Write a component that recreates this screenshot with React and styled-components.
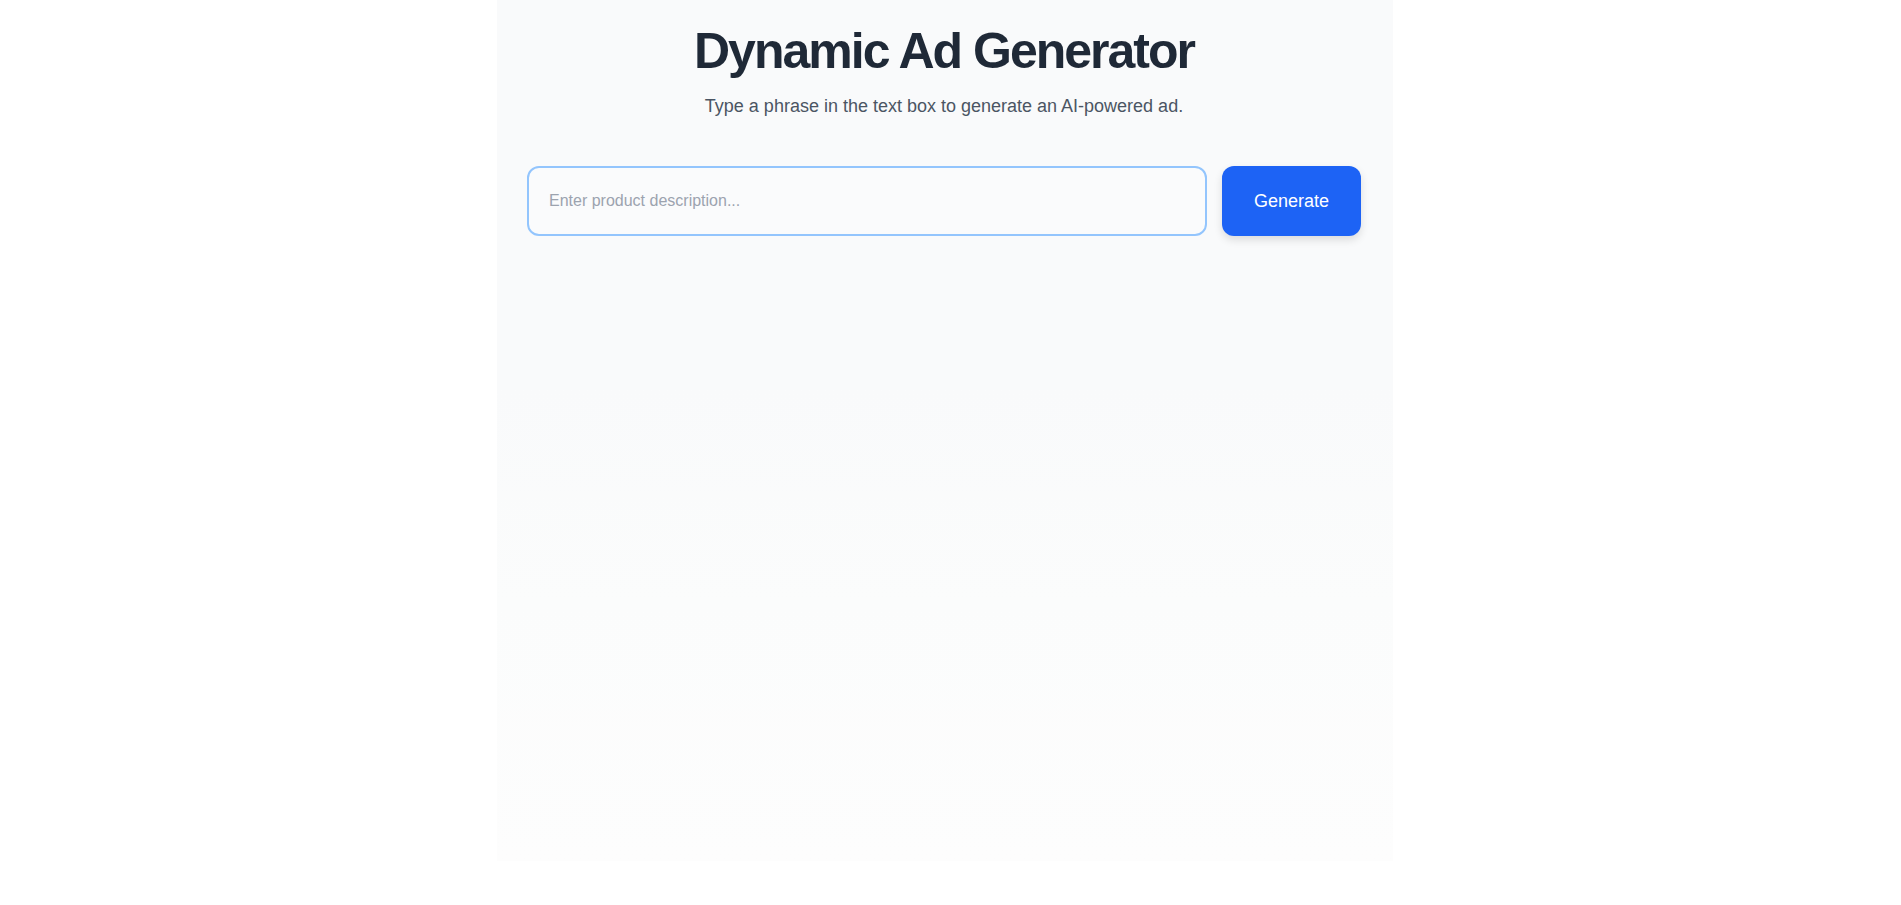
import styled, { createGlobalStyle } from 'styled-components';

const GlobalStyle = createGlobalStyle`
  body {
    margin: 0;
    background: #ffffff;
    font-family: "Liberation Sans", Arial, sans-serif;
  }
`;

const Page = styled.div`
    padding-right: 11px;
`;

const Container = styled.div`
    max-width: 896px;
    min-height: 861px;
    margin: 0 auto;
    padding: 24px 32px 0 30px;
    box-sizing: border-box;
    background: linear-gradient(180deg, #f9fafb 0%, #f9fafb 45%, #fbfcfc 70%, #fdfdfd 100%);
`;

const Header = styled.header`
    display: flex;
    flex-direction: column;
    align-items: center;
    margin-bottom: 49px;
`;

const Title = styled.h1`
    margin: 0;
    font-size: 50px;
    font-weight: 700;
    line-height: 1.1;
    color: #1f2937;
    letter-spacing: -2px;
`;

const Subtitle = styled.p`
    margin: 17px 0 0;
    font-size: 18px;
    color: #4b5563;
`;

const Form = styled.form`
    display: flex;
    gap: 15px;
`;

const Input = styled.input`
    flex: 1;
    height: 70px;
    box-sizing: border-box;
    padding: 0 20px;
    border: 2px solid #93c5fd;
    border-radius: 12px;
    background: #fafbfc;
    font-family: inherit;
    font-size: 16px;
    color: #1f2937;
    outline: none;

    &::placeholder {
        color: #9ca3af;
    }
`;

const Button = styled.button`
    height: 70px;
    padding: 0 32px;
    border: none;
    border-radius: 12px;
    background: #1d63f5;
    color: #ffffff;
    font-family: inherit;
    font-size: 18px;
    cursor: pointer;
    box-shadow: 0 4px 8px rgba(0, 0, 0, 0.12);
`;

function App() {
    return (
        <Page>
            <GlobalStyle />
            <Container>
                <Header>
                    <Title>Dynamic Ad Generator</Title>
                    <Subtitle>Type a phrase in the text box to generate an AI-powered ad.</Subtitle>
                </Header>
                <Form onSubmit={e => e.preventDefault()}>
                    <Input type="text" placeholder="Enter product description..." />
                    <Button type="submit">Generate</Button>
                </Form>
            </Container>
        </Page>
    );
}

export default App;
